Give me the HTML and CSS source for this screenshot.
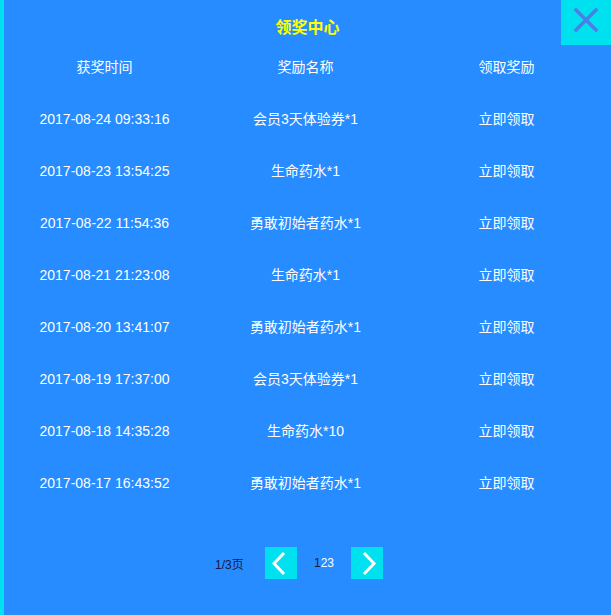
FILE: index.html
```html
<!DOCTYPE html>
<html lang="zh">
<head>
<meta charset="utf-8">
<title>领奖中心</title>
<link rel="stylesheet" href="styles.css">
</head>
<body>
<div class="panel">
  <h1 class="title">领奖中心</h1>
  <a class="close" href="#" aria-label="关闭">
    <svg width="50" height="45" viewBox="0 0 50 45"><path d="M15 10 L35 30 M35 10 L15 30" stroke="#4b7fe6" stroke-width="3.5" fill="none" stroke-linecap="square"/></svg>
  </a>
  <div class="table">
    <div class="row head"><span>获奖时间</span><span>奖励名称</span><span>领取奖励</span></div>
    <div class="row"><span>2017-08-24 09:33:16</span><span>会员3天体验券*1</span><span>立即领取</span></div>
    <div class="row"><span>2017-08-23 13:54:25</span><span>生命药水*1</span><span>立即领取</span></div>
    <div class="row"><span>2017-08-22 11:54:36</span><span>勇敢初始者药水*1</span><span>立即领取</span></div>
    <div class="row"><span>2017-08-21 21:23:08</span><span>生命药水*1</span><span>立即领取</span></div>
    <div class="row"><span>2017-08-20 13:41:07</span><span>勇敢初始者药水*1</span><span>立即领取</span></div>
    <div class="row"><span>2017-08-19 17:37:00</span><span>会员3天体验券*1</span><span>立即领取</span></div>
    <div class="row"><span>2017-08-18 14:35:28</span><span>生命药水*10</span><span>立即领取</span></div>
    <div class="row"><span>2017-08-17 16:43:52</span><span>勇敢初始者药水*1</span><span>立即领取</span></div>
  </div>
  <div class="pager">
    <span class="info">1/3页</span>
    <a class="btn" href="#" aria-label="上一页"><svg width="32" height="32" viewBox="0 0 32 32"><polyline points="19,6 9,16.5 19,27" stroke="#fff" stroke-width="3" fill="none"/></svg></a>
    <span class="pages"><span class="cur">1</span>23</span>
    <a class="btn" href="#" aria-label="下一页"><svg width="32" height="32" viewBox="0 0 32 32"><polyline points="13,6 23,16.5 13,27" stroke="#fff" stroke-width="3" fill="none"/></svg></a>
  </div>
</div>
</body>
</html>
```
FILE: styles.css
```css
* { box-sizing: border-box; }
html, body { margin: 0; padding: 0; }
body {
  font-family: "Liberation Sans", "Noto Sans CJK SC", sans-serif;
  background: #268cff;
}
.panel {
  position: relative;
  width: 611px;
  height: 615px;
  background: #268cff;
  border-left: 4px solid #00e1f0;
  color: #fff;
}
.title {
  margin: 0;
  padding-top: 18px;
  height: 41px;
  text-align: center;
  font-size: 16px;
  line-height: 20px;
  font-weight: bold;
  color: #ffff00;
}
.close {
  position: absolute;
  top: 0;
  right: 0;
  width: 50px;
  height: 45px;
  background: #00e1f0;
  display: block;
}
.close svg { display: block; }
.table { display: flex; flex-direction: column; width: 603px; }
.row {
  display: grid;
  grid-template-columns: 1fr 1fr 1fr;
  height: 52px;
  align-items: center;
  font-size: 14px;
  line-height: 16px;
}
.row span { text-align: center; }
.pager {
  display: flex;
  align-items: center;
  margin-top: 38px;
  padding-left: 211px;
  height: 32px;
  font-size: 12px;
}
.info { color: #1a1a40; width: 30px; margin-right: 20px; }
.btn {
  display: block;
  width: 32px;
  height: 32px;
  background: #00e1f0;
}
.btn svg { display: block; }
.pages { margin: 0 17px; color: #fff; width: 20px; }
.cur { color: #1a1a40; }
```
